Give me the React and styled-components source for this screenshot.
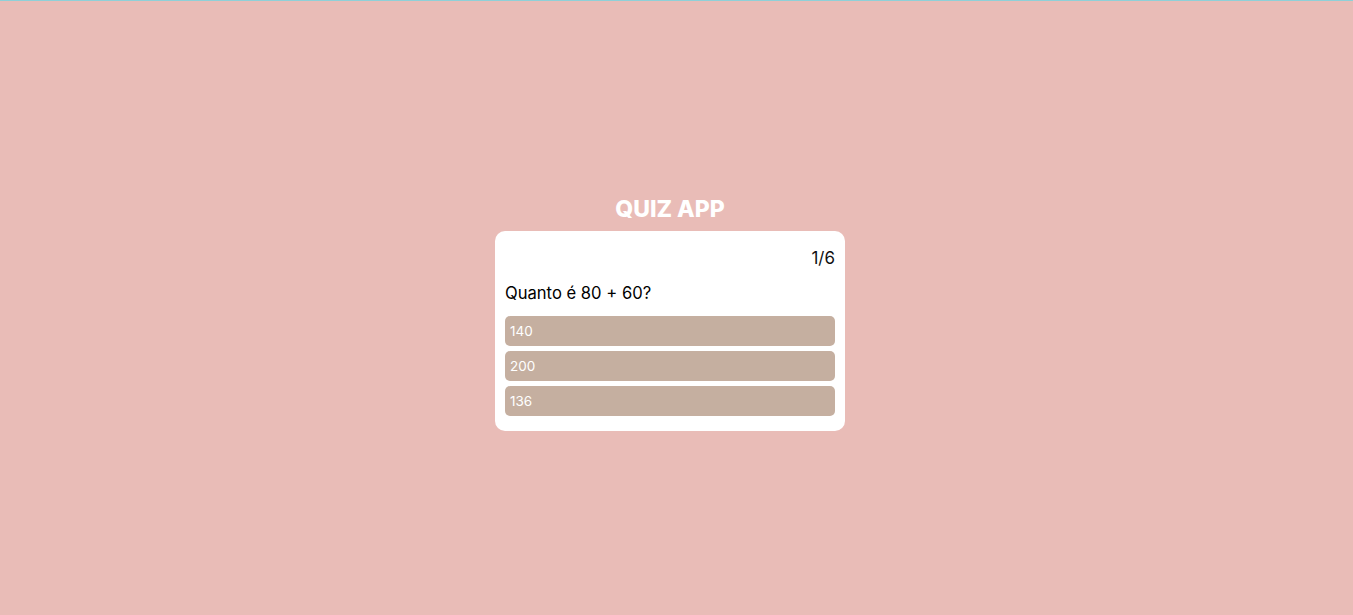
import React from "react";
import styled, { createGlobalStyle } from "styled-components";

const GlobalStyle = createGlobalStyle`
  * { box-sizing: border-box; }
  body {
    margin: 0;
    background: #e9bcb7;
    font-family: "Inter", "Open Sans", sans-serif;
    border-top: 1px solid #8fd0d8;
  }
`;

const question = {
  text: "Quanto é 80 + 60?",
  options: ["140", "200", "136"],
};

const App = () => {
  return (
    <>
      <GlobalStyle />
      <Page>
        <Title>QUIZ APP</Title>
        <Card>
          <Counter>1/6</Counter>
          <Question>{question.text}</Question>
          <Options>
            {question.options.map((opt) => (
              <Option key={opt}>{opt}</Option>
            ))}
          </Options>
        </Card>
      </Page>
    </>
  );
};

//Styled Components
const Page = styled.div`
  height: 614px;
  display: flex;
  flex-direction: column;
  align-items: center;
  padding: 193px 13px 0 0;
`;

const Title = styled.h1`
  margin: 0 0 7px;
  color: #fff;
  font-size: 23px;
  font-weight: 800;
  line-height: 30px;
`;

const Card = styled.div`
  width: 350px;
  background: #fff;
  border-radius: 10px;
  padding: 16px 10px 15px;
  display: flex;
  flex-direction: column;
`;

const Counter = styled.div`
  align-self: flex-end;
  font-size: 17px;
  line-height: 22px;
  color: #111;
`;

const Question = styled.p`
  margin: 13px 0 12px;
  font-size: 16.6px;
  line-height: 22px;
  color: #000;
`;

const Options = styled.div`
  display: flex;
  flex-direction: column;
  gap: 5px;
`;

const Option = styled.button`
  height: 30px;
  border: none;
  border-radius: 5px;
  background: #c5afa0;
  color: #fff;
  font-family: inherit;
  font-size: 13.5px;
  text-align: left;
  padding: 0 5px;
  cursor: pointer;
`;

export default App;
